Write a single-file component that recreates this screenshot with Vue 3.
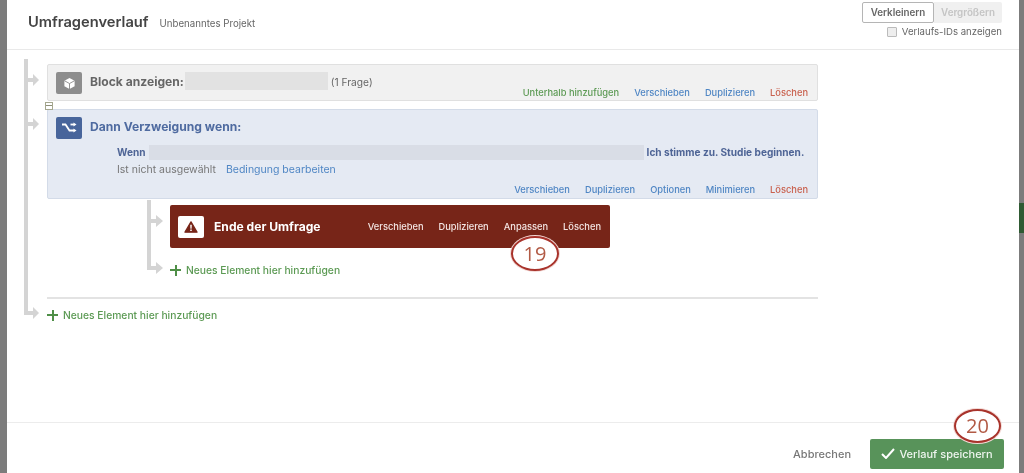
<script setup>
const blockActions = [
  { label: 'Unterhalb hinzufügen', kind: 'add-link' },
  { label: 'Verschieben', kind: 'link' },
  { label: 'Duplizieren', kind: 'link' },
  { label: 'Löschen', kind: 'del' },
]
const branchActions = [
  { label: 'Verschieben', kind: 'link' },
  { label: 'Duplizieren', kind: 'link' },
  { label: 'Optionen', kind: 'link' },
  { label: 'Minimieren', kind: 'link' },
  { label: 'Löschen', kind: 'del' },
]
const endActions = ['Verschieben', 'Duplizieren', 'Anpassen', 'Löschen']
</script>

<template>
  <div class="page">
    <div class="side side-left"></div>
    <main class="modal">
      <header class="head">
        <div class="head-title">
          <h1>Umfragenverlauf</h1>
          <span class="project">Unbenanntes Projekt</span>
        </div>
        <div class="head-tools">
          <div class="zoom">
            <span class="zoom-on">Verkleinern</span>
            <span class="zoom-off">Vergrößern</span>
          </div>
          <label class="ids"><i class="check"></i>Verlaufs-IDs anzeigen</label>
        </div>
      </header>

      <section class="flow">
        <svg class="lines" width="170" height="280" viewBox="0 0 170 280" fill="none">
          <g stroke="#d4d4d4" stroke-width="4">
            <path d="M19 9V263H28" />
            <path d="M19 30H28" />
            <path d="M19 74H28" />
            <path d="M142 150V218H151" />
            <path d="M142 171H151" />
          </g>
          <g fill="#d4d4d4">
            <path d="M26 24l6 6-6 6z" />
            <path d="M26 68l6 6-6 6z" />
            <path d="M26 257l6 6-6 6z" />
            <path d="M149 165l7 6-7 6z" />
            <path d="M149 212l7 6-7 6z" />
          </g>
        </svg>

        <article class="card block">
          <div class="card-top">
            <span class="icon icon-gray">
              <svg width="13" height="13" viewBox="0 0 14 14">
                <path d="M7 1l5.500 3v6L7 13 1.500 10V4z" fill="#fff" />
                <path d="M1.500 4L7 7l5.500-3M7 7v6" stroke="#8c8c8c" stroke-width="1" fill="none" />
              </svg>
            </span>
            <strong class="block-title">Block anzeigen:</strong>
            <span class="redact redact-block"></span>
            <span class="count">(1 Frage)</span>
          </div>
          <div class="actions block-actions">
            <a v-for="a in blockActions" :key="a.label" :class="a.kind">{{ a.label }}</a>
          </div>
        </article>

        <span class="collapse"></span>

        <article class="card branch">
          <div class="card-top">
            <span class="icon icon-blue">
              <svg width="16" height="12" viewBox="0 0 16 12" fill="none" stroke="#fff" stroke-width="1.800">
                <path d="M1 2.500h3.500l4 6H13" />
                <path d="M9.500 2.500H13" />
                <path d="M12.500 .5l3 2-3 2zM12.500 6.500l3 2-3 2z" fill="#fff" stroke="none" />
              </svg>
            </span>
            <strong class="branch-title">Dann Verzweigung wenn:</strong>
          </div>
          <div class="cond">
            <div class="cond-line">
              <b>Wenn</b>
              <span class="redact redact-cond"></span>
              <b>Ich stimme zu. Studie beginnen.</b>
            </div>
            <div class="cond-sub">
              <span>Ist nicht ausgewählt</span>
              <a class="link">Bedingung bearbeiten</a>
            </div>
          </div>
          <div class="actions branch-actions">
            <a v-for="a in branchActions" :key="a.label" :class="a.kind">{{ a.label }}</a>
          </div>
        </article>

        <div class="nested">
          <article class="end">
            <span class="icon icon-white">
              <svg width="14" height="12" viewBox="0 0 16 14">
                <path d="M8 1l7 12H1z" fill="#772518" stroke="#772518" stroke-width="1.500" stroke-linejoin="round" />
                <path d="M7.100 4.500h1.800l-.2 4.500H7.300zM7.100 10h1.800v1.700H7.100z" fill="#fff" />
              </svg>
            </span>
            <strong class="end-title">Ende der Umfrage</strong>
            <div class="end-actions">
              <a v-for="a in endActions" :key="a">{{ a }}</a>
            </div>
            <span class="badge badge-19">19</span>
          </article>
          <a class="add add-nested"><i class="plus"></i>Neues Element hier hinzufügen</a>
        </div>

        <hr class="rule" />
        <a class="add"><i class="plus"></i>Neues Element hier hinzufügen</a>
      </section>

      <footer class="foot">
        <a class="cancel">Abbrechen</a>
        <button class="save">
          <svg width="14" height="11" viewBox="0 0 14 11" fill="none" stroke="#fff" stroke-width="2">
            <path d="M1 6l4 4 8-9" />
          </svg>
          Verlauf speichern
          <span class="badge badge-20">20</span>
        </button>
      </footer>
    </main>
    <div class="side side-right"><span class="side-green"></span></div>
  </div>
</template>

<style>
html, body { margin: 0; background: #fff; }
</style>

<style scoped>
.page {
  display: flex;
  width: 1024px;
  height: 473px;
  overflow: hidden;
  font-family: Inter, "Liberation Sans", sans-serif;
  color: #555;
  filter: blur(0.55px);
}
.side { flex: none; background: #7c7c7c; }
.side-left { width: 7px; }
.side-right { width: 5px; padding-top: 203px; box-sizing: border-box; }
.side-green { display: block; height: 30px; background: #2f5a33; }
.modal { flex: 1; min-width: 0; display: flex; flex-direction: column; background: #fff; }

.head {
  flex: none;
  height: 49px;
  border-bottom: 1px solid #e9e9e9;
  display: flex;
  justify-content: space-between;
  padding: 0 17px 0 21px;
}
.head-title { display: flex; align-items: baseline; gap: 11px; padding-top: 13px; }
h1 { margin: 0; font-size: 14.700px; line-height: 18px; font-weight: 600; color: #444; }
.project { font-size: 9.700px; color: #666; }
.head-tools { display: flex; flex-direction: column; align-items: flex-end; padding-top: 2px; }
.zoom { display: flex; font-size: 9.800px; font-weight: 600; line-height: 19px; }
.zoom-on { width: 70px; text-align: center; border: 1px solid #b5b5b5; border-radius: 2px; height: 19px; color: #666; background: #fff; }
.zoom-off { width: 68px; text-align: center; height: 21px; line-height: 21px; background: #f0f0f0; color: #c4c4c4; border-radius: 0 2px 2px 0; }
.ids { display: flex; align-items: center; gap: 5px; margin-top: 3px; font-size: 9.600px; color: #666; line-height: 11px; }
.check { width: 8px; height: 8px; border: 1px solid #bbb; background: #eee; border-radius: 1px; }

.flow { flex: 1; position: relative; padding: 14px 0 0 40px; min-height: 0; }
.lines { position: absolute; left: 0; top: 0; }

.card { position: relative; box-sizing: border-box; width: 771px; border-radius: 2px; }
.card-top { display: flex; align-items: center; height: 22px; padding: 7px 0 0 8px; }
.block { height: 37px; background: #f1f1f1; border: 1px solid #e0e0e0; }
.branch { height: 90px; background: #e5eaf3; border: 1px solid #d3dbe8; }
.collapse {
  display: block;
  position: relative;
  z-index: 1;
  width: 6px;
  height: 6px;
  margin: 1px 0 -1px -2px;
  border: 1px solid #a5a78f;
  background: linear-gradient(#fff 2px, #8d8f78 2px, #8d8f78 3px, #fff 3px);
}
.icon { flex: none; display: flex; align-items: center; justify-content: center; width: 26px; height: 22px; border-radius: 2px; }
.icon-gray { background: #8d8d8d; }
.icon-blue { background: #48659b; }
.icon-white { background: #fff; }
.block-title { margin: 0 0 3px 8px; font-size: 12.100px; font-weight: 700; color: #666; }
.branch-title { margin: 0 0 4px 8px; font-size: 12.100px; font-weight: 700; color: #4f6ba0; }
.redact { display: block; flex: none; }
.redact-block { width: 143px; height: 18px; margin: 0 0 4px 1px; background: #e2e2e2; }
.count { margin: 0 0 3px 3px; font-size: 10.200px; color: #666; }

.actions { position: absolute; right: 9px; display: flex; gap: 15px; font-size: 9.300px; font-weight: 500; line-height: 11px; }
.block-actions { bottom: 2px; }
.branch-actions { bottom: 3px; }
.add-link { color: #5c9a54; }
.link { color: #4f86c4; }
.del { color: #c9614e; }

.cond { padding: 5px 0 0 69px; font-size: 10.100px; }
.cond-line { display: flex; align-items: center; gap: 3px; height: 16px; }
.cond-line b { font-weight: 700; color: #4f6596; }
.redact-cond { width: 495px; height: 15px; background: #d9dde6; }
.cond-sub { display: flex; gap: 10px; margin-top: 4px; line-height: 11px; color: #777; font-size: 10.500px; }

.nested { padding: 6px 0 0 123px; }
.end {
  position: relative;
  box-sizing: border-box;
  width: 440px;
  height: 43px;
  display: flex;
  align-items: center;
  padding: 0 9px 0 8px;
  background: #772518;
  border-radius: 2px;
  color: #fff;
}
.end-title { margin-left: 10px; font-size: 12.100px; font-weight: 700; }
.end-actions { margin-left: auto; display: flex; gap: 15px; font-size: 9.300px; font-weight: 500; color: #f4e6e3; }
.badge {
  position: absolute;
  display: flex;
  align-items: center;
  justify-content: center;
  box-sizing: border-box;
  border: 2.500px solid #a8332b;
  border-radius: 50%;
  background: #fff;
  color: #b25a45;
  font-family: "Open Sans", "Liberation Sans", sans-serif;
  font-size: 20px;
  font-weight: 400;
  box-shadow: 0 0 0 1px #f3d9d6;
}
.badge-19 { left: 341px; top: 31px; width: 48px; height: 35px; }
.badge-20 { right: 3px; top: -30px; width: 47px; height: 34px; }

.add { display: flex; align-items: center; color: #5c9a54; font-size: 10.300px; font-weight: 500; line-height: 12px; }
.add-nested { margin-top: 16px; }
.plus {
  flex: none;
  width: 11px;
  height: 11px;
  margin-right: 5px;
  background:
    linear-gradient(#4f8f47, #4f8f47) center / 100% 2px no-repeat,
    linear-gradient(#4f8f47, #4f8f47) center / 2px 100% no-repeat;
}
.rule { width: 771px; height: 2px; border: 0; margin: 21px 0 10px; background: #e3e3e3; }

.foot {
  flex: none;
  height: 51px;
  border-top: 1px solid #ececec;
  display: flex;
  align-items: center;
  justify-content: flex-end;
  gap: 19px;
  padding: 11px 15px 0 0;
  box-sizing: border-box;
}
.cancel { font-size: 11px; font-weight: 500; color: #777; }
.save {
  position: relative;
  display: flex;
  align-items: center;
  justify-content: center;
  gap: 4px;
  width: 134px;
  height: 30px;
  padding: 0;
  border: 0;
  border-radius: 2px;
  background: #58935a;
  color: #eef5ee;
  font-family: inherit;
  font-size: 11px;
  font-weight: 500;
}
</style>
